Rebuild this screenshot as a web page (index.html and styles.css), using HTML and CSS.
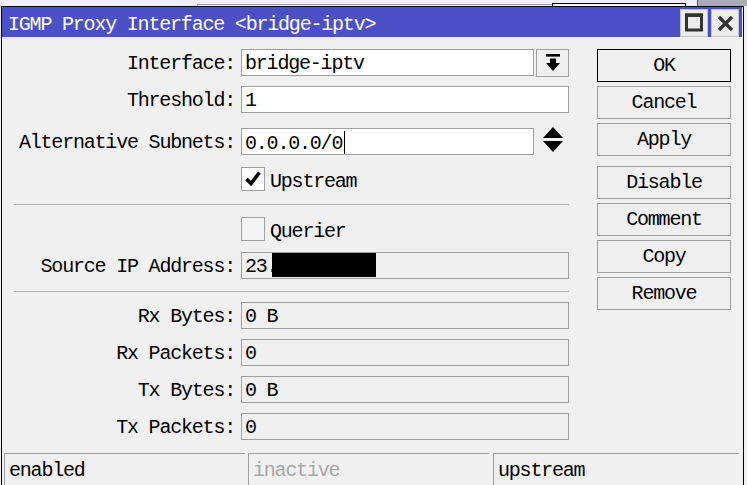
FILE: index.html
```html
<!DOCTYPE html>
<html>
<head>
<meta charset="utf-8">
<title>IGMP Proxy Interface</title>
<link rel="stylesheet" href="styles.css">
</head>
<body>
<div class="desk">
  <div class="desk-top">
    <span class="dt-gap"></span>
    <span class="dt-line"></span>
    <span class="dt-box"></span>
    <span class="dt-gap2"></span>
    <span class="dt-grey"></span>
  </div>
  <div class="window">
    <div class="titlebar">
      <div class="title">IGMP Proxy Interface &lt;bridge-iptv&gt;</div>
      <div class="tbtns">
        <div class="tbtn">
          <svg width="28" height="28" viewBox="0 0 28 28">
            <rect x="6.5" y="6" width="15" height="15" fill="none" stroke="#333" stroke-width="3"/>
            <rect x="5" y="4.5" width="18" height="3.5" fill="#333"/>
          </svg>
        </div>
        <div class="tbtn">
          <svg width="28" height="28" viewBox="0 0 28 28">
            <path d="M8 8 L21 21 M21 8 L8 21" stroke="#333" stroke-width="3.4" fill="none"/>
          </svg>
        </div>
      </div>
    </div>
    <div class="content">
      <div class="form">
        <div class="row">
          <div class="label">Interface:</div>
          <div class="field edit w-short">bridge-iptv</div>
          <div class="dd">
            <svg width="14" height="18" viewBox="0 0 14 18">
              <rect x="0" y="0" width="14" height="2.6" fill="#000"/>
              <path d="M4 4.5 H10 V9 H14 L7 17 L0 9 H4 Z" fill="#000"/>
            </svg>
          </div>
        </div>
        <div class="row gap10">
          <div class="label">Threshold:</div>
          <div class="field edit w-full">1</div>
        </div>
        <div class="row gap15">
          <div class="label">Alternative Subnets:</div>
          <div class="field edit w-short">0.0.0.0/0<span class="caret"></span></div>
          <div class="spin">
            <svg width="20" height="25" viewBox="0 0 20 25">
              <path d="M10 0 L20 11 H0 Z" fill="#000"/>
              <path d="M0 14 H20 L10 25 Z" fill="#000"/>
            </svg>
          </div>
        </div>
        <div class="row check-row gap12">
          <div class="label"></div>
          <div class="chk on">
            <svg width="22" height="22" viewBox="0 0 22 22">
              <path d="M4.5 11 L9 15.5 L17.5 4.5" stroke="#000" stroke-width="3.6" fill="none"/>
            </svg>
          </div>
          <div class="chk-text">Upstream</div>
        </div>
        <div class="sep sep1"></div>
        <div class="row check-row gap12">
          <div class="label"></div>
          <div class="chk off"></div>
          <div class="chk-text">Querier</div>
        </div>
        <div class="row gap11">
          <div class="label">Source IP Address:</div>
          <div class="field ro w-full">23.<span class="redact"></span></div>
        </div>
        <div class="sep sep2"></div>
        <div class="row gap10">
          <div class="label">Rx Bytes:</div>
          <div class="field ro w-full">0 B</div>
        </div>
        <div class="row gap10">
          <div class="label">Rx Packets:</div>
          <div class="field ro w-full">0</div>
        </div>
        <div class="row gap10">
          <div class="label">Tx Bytes:</div>
          <div class="field ro w-full">0 B</div>
        </div>
        <div class="row gap10">
          <div class="label">Tx Packets:</div>
          <div class="field ro w-full">0</div>
        </div>
      </div>
      <div class="btns">
        <div class="btn ok">OK</div>
        <div class="btn">Cancel</div>
        <div class="btn">Apply</div>
        <div class="btn spaced">Disable</div>
        <div class="btn">Comment</div>
        <div class="btn">Copy</div>
        <div class="btn">Remove</div>
      </div>
    </div>
    <div class="status">
      <div class="panel p1">enabled</div>
      <div class="panel p2 dim">inactive</div>
      <div class="panel p3">upstream</div>
    </div>
  </div>
</div>
</body>
</html>
```

FILE: styles.css
```css
html, body {
  margin: 0;
  padding: 0;
  width: 747px;
  height: 485px;
  overflow: hidden;
  background: #f0f0f0;
}

body {
  font-family: "Liberation Mono", "DejaVu Sans Mono", monospace;
  font-size: 20px;
  letter-spacing: -1.2px;
  color: #000;
}

.desk {
  width: 747px;
  height: 485px;
  overflow: hidden;
}

.desk-top {
  display: flex;
  height: 6px;
}

.dt-gap { width: 197px; }
.dt-line {
  width: 354px;
  margin-top: 4px;
  border-top: 1px solid #a0a0a0;
  border-left: 1px solid #a0a0a0;
}
.dt-box {
  width: 132px;
  margin-top: 3px;
  background: #fff;
  border: 1px solid #000;
  border-bottom: none;
}
.dt-gap2 { width: 11px; }
.dt-grey {
  flex: 1;
  background: #adadad;
  border-left: 1px solid #555;
}

.window {
  box-sizing: border-box;
  width: 743px;
  height: 479px;
  margin-left: 1px;
  border: 1px solid #000;
  border-bottom: none;
  background: #f0f0f0;
}

.titlebar {
  display: flex;
  justify-content: space-between;
  height: 30px;
  margin-right: 1px;
  background: #4b50c6;
}

.title {
  color: #fff;
  padding: 6px 0 0 6px;
  line-height: 24px;
  white-space: nowrap;
}

.tbtns {
  display: flex;
  gap: 3px;
  padding-top: 2px;
  padding-right: 3px;
}

.tbtn {
  box-sizing: border-box;
  width: 28px;
  height: 28px;
  background: #ececec;
  border: 1px solid #c4c4c4;
  display: flex;
  align-items: center;
  justify-content: center;
}

.tbtn svg {
  display: block;
  margin: -1px;
}

.content {
  display: flex;
}

.form {
  width: 567px;
  padding-top: 12px;
}

.row {
  display: flex;
  align-items: flex-start;
  height: 27px;
}

.gap10 { margin-top: 10px; }
.gap11 { margin-top: 11px; }
.gap12 { margin-top: 12px; }
.gap15 { margin-top: 15px; }

.label {
  width: 233px;
  flex: none;
  margin-right: 6px;
  text-align: right;
  padding-top: 3px;
  line-height: 24px;
  white-space: nowrap;
}

.field {
  box-sizing: border-box;
  height: 27px;
  border: 1px solid #a0a0a0;
  padding: 2px 0 0 3px;
  line-height: 24px;
  white-space: nowrap;
  overflow: hidden;
}

.edit { background: #fff; }
.ro { background: #f0f0f0; }
.w-full { width: 328px; }
.w-short { width: 293px; }

.dd {
  box-sizing: border-box;
  width: 33px;
  height: 28px;
  margin-left: 2px;
  border: 1px solid #a0a0a0;
  background: #f0f0f0;
  display: flex;
  align-items: center;
  justify-content: center;
}

.dd svg { display: block; }

.spin {
  margin-left: 9px;
  margin-top: -1px;
}

.spin svg { display: block; }

.caret {
  display: inline-block;
  width: 1px;
  height: 23px;
  margin-left: 2px;
  background: #000;
  vertical-align: -5px;
}

.check-row {
  height: 24px;
}

.chk {
  box-sizing: border-box;
  width: 24px;
  height: 24px;
  border: 1px solid #a0a0a0;
  display: flex;
  align-items: center;
  justify-content: center;
}

.chk.on { background: #fff; }
.chk.off { background: #f3f3f3; }
.chk svg { display: block; }

.chk-text {
  margin-left: 5px;
  padding-top: 3px;
  line-height: 24px;
}

.sep {
  height: 1px;
  margin-left: 12px;
  width: 555px;
  background: #b4b4b4;
}

.sep1 { margin-top: 13px; }
.sep2 { margin-top: 12px; }

.redact {
  display: inline-block;
  width: 104px;
  height: 25px;
  margin-top: -3px;
  margin-left: -5px;
  background: #000;
  vertical-align: top;
}

.btns {
  width: 134px;
  margin-left: 28px;
  padding-top: 12px;
  display: flex;
  flex-direction: column;
}

.btn {
  box-sizing: border-box;
  height: 33px;
  margin-top: 4px;
  border: 1px solid #a0a0a0;
  background: #f0f0f0;
  text-align: center;
  line-height: 31px;
  white-space: nowrap;
}

.btn.ok {
  margin-top: 0;
  border-color: #000;
}

.btn.spaced { margin-top: 10px; }

.status {
  display: flex;
  margin-top: 13px;
  padding-left: 2px;
  height: 40px;
}

.panel {
  box-sizing: border-box;
  height: 40px;
  border-top: 1px solid #a0a0a0;
  border-left: 1px solid #a0a0a0;
  padding: 5px 0 0 4px;
  line-height: 24px;
  white-space: nowrap;
}

.p1 { width: 241px; }
.p2 { width: 241px; margin-left: 3px; }
.p3 { width: 246px; margin-left: 4px; }
.dim { color: #a8a8a8; }
```
